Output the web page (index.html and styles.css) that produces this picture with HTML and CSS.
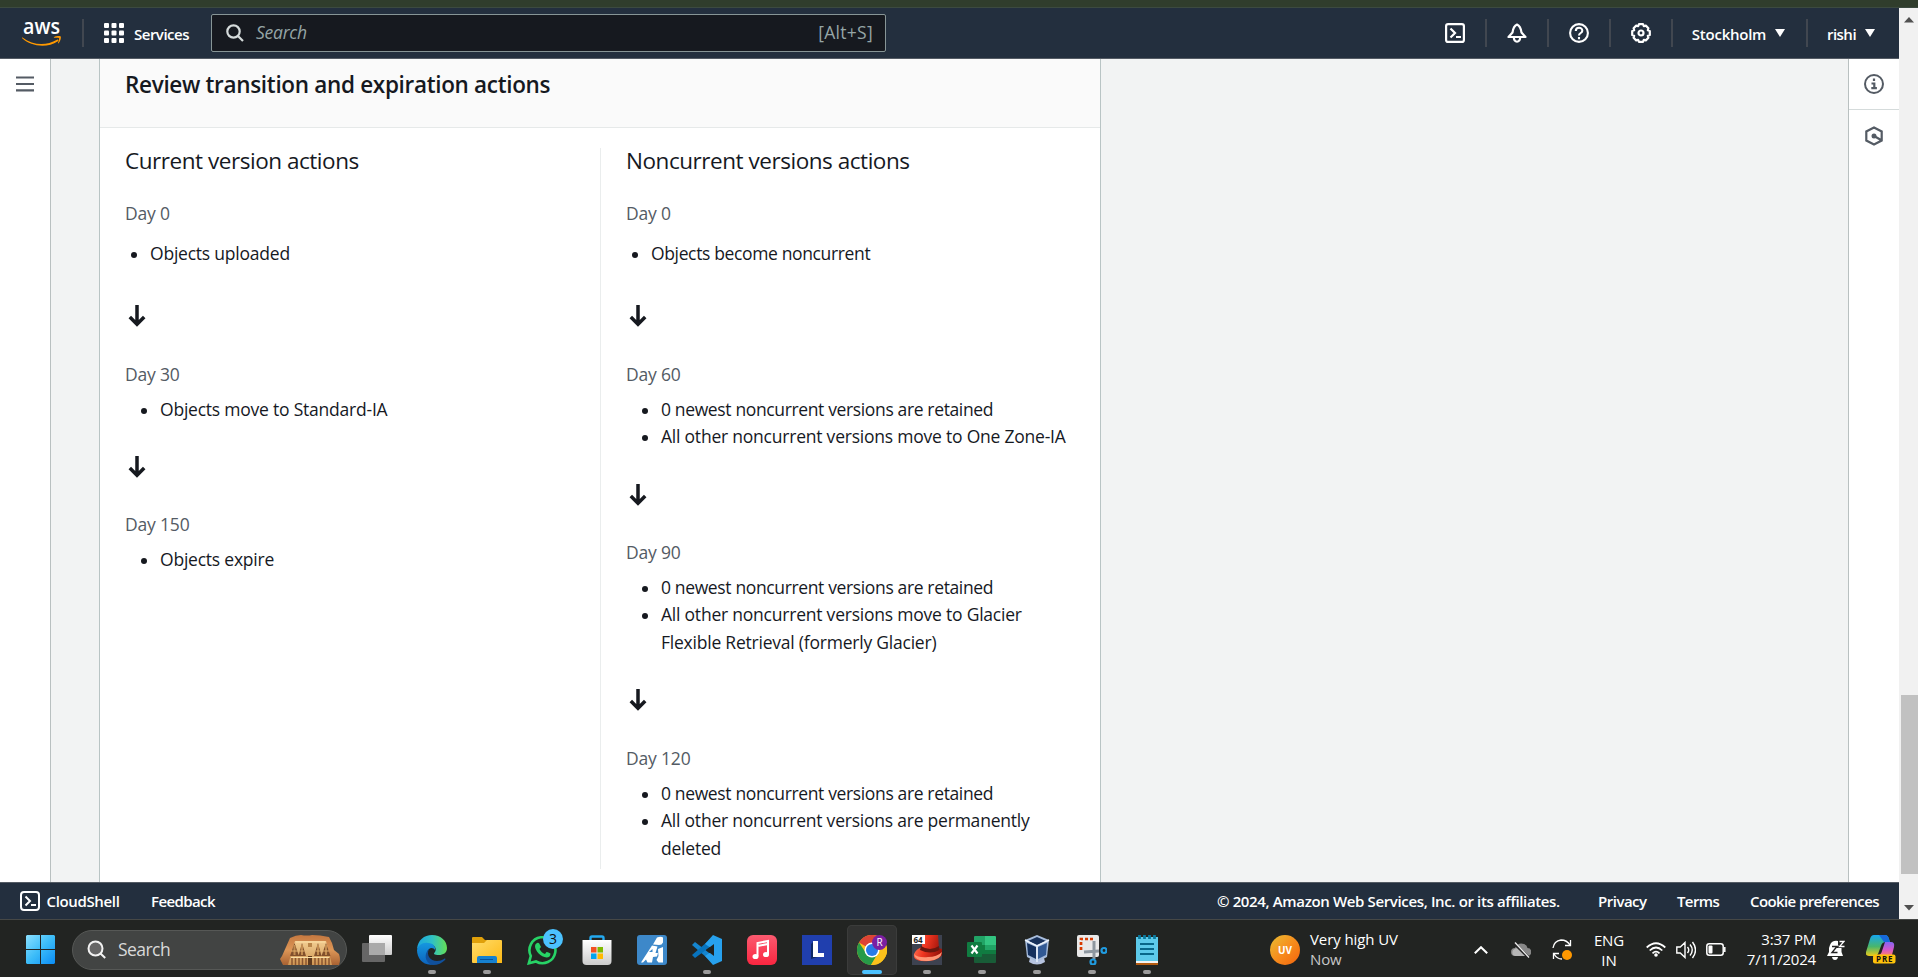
FILE: index.html
```
<!DOCTYPE html>
<html lang="en">
<head>
<meta charset="utf-8">
<title>Create lifecycle rule</title>
<link rel="stylesheet" href="styles.css">
</head>
<body>
<div class="top-strip"></div>
<div class="browser">
  <div class="console">
    <header class="nav">
      <svg class="aws-logo" viewBox="0 -10 40 47" width="40" height="47">
        <text x="1" y="14" textLength="37" lengthAdjust="spacingAndGlyphs" class="aws-word">aws</text>
        <path d="M.5 17.500c11 8.300 24 8.300 34.500 2.200 1.200-.6 2 .6.900 1.500C25 28.600 9 26.500.2 18.300c-.5-.5-.2-1.100.3-.8z" fill="#f90"/>
        <path d="M32 17.200c2-1.200 6-1.400 6.700-.6.600.9-.2 5-2.200 6.700-.4.300-.7.100-.5-.3.600-1.500 1.500-4.300 1-4.900s-3.300-.5-4.800-.3c-.5.100-.6-.3-.2-.6z" fill="#f90"/>
      </svg>
      <span class="nav-rule"></span>
      <svg class="grid-icon" viewBox="0 0 20 20" width="20" height="20" fill="#fff"><g id="r"><rect width="5" height="5" rx="1"/><rect x="7.500" width="5" height="5" rx="1"/><rect x="15" width="5" height="5" rx="1"/></g><use href="#r" y="7.500"/><use href="#r" y="15"/></svg>
      <span class="nav-text services">Services</span>
      <div class="search">
        <svg viewBox="0 0 18 18" width="18" height="18" fill="none" stroke="#d5dbdb" stroke-width="2.200"><circle cx="7.500" cy="7.500" r="6.200"/><path d="M12 12l5 5"/></svg>
        <span class="search-hint">Search</span>
        <span class="search-key">[Alt+S]</span>
      </div>
      <div class="nav-right">
        <div class="nav-cell first"><svg viewBox="0 0 20 20" width="20" height="20" fill="none" stroke="#fff" stroke-width="2.200"><rect x="1.100" y="1.100" width="17.800" height="17.800" rx="2"/><path d="M5.500 5.500L10 10l-4.500 4.500M11 14h5"/></svg></div>
        <div class="nav-cell c62"><svg viewBox="0 0 20 20" width="20" height="20" fill="none" stroke="#fff" stroke-width="2.200" stroke-linejoin="round"><path d="M10 1.500C6.500 3 6 6 5.500 9.500L1.500 14h17l-4-4.500C14 6 13.500 3 10 1.500zM6.800 14.500c.4 5.500 6 5.500 6.400 0"/></svg></div>
        <div class="nav-cell c62"><svg viewBox="0 0 20 20" width="20" height="20" fill="none" stroke="#fff" stroke-width="2.100"><circle cx="10" cy="10" r="8.900"/><path d="M6.800 8c0-4.200 6.500-4.200 6.500-.3 0 2.400-3.300 2.200-3.300 4.800M10 14v2.200"/></svg></div>
        <div class="nav-cell c62"><svg viewBox="0 0 20 20" width="20" height="20" fill="none" stroke="#fff" stroke-width="2.200" stroke-linejoin="round"><path d="M8 1.200h4l.8 2 2-.6 2.600 2.600-.6 2 2 .8v4l-2 .8.600 2-2.600 2.600-2-.6-.8 2H8l-.8-2-2 .6-2.600-2.600.6-2-2-.8V8l2-.8-.6-2 2.600-2.600 2 .6z"/><circle cx="10" cy="10" r="2.500"/></svg></div>
        <div class="nav-cell region"><span class="nav-text">Stockholm</span><svg viewBox="0 0 10 8" width="10" height="8"><path d="M0 0h10L5 8z" fill="#fff"/></svg></div>
        <div class="nav-cell user"><span class="nav-text">rishi</span><svg viewBox="0 0 10 8" width="10" height="8"><path d="M0 0h10L5 8z" fill="#fff"/></svg></div>
      </div>
    </header>
    <main class="body">
      <aside class="left-rail"><svg viewBox="0 0 18 16" width="18" height="16" stroke="#545b64" stroke-width="2.200"><path d="M0 1.500h18M0 8h18M0 14.300h18"/></svg></aside>
      <section class="card">
        <h2 class="card-title">Review transition and expiration actions</h2>
        <div class="columns">
          <div class="col current">
            <h3>Current version actions</h3>
            <p class="day">Day 0</p>
            <ul class="first-list"><li>Objects uploaded</li></ul>
            <div class="step"><svg viewBox="0 0 18 22" width="18" height="22"><path d="M9 0v18.500M1.800 12L9 19.300 16.200 12"/></svg></div>
            <p class="day">Day 30</p>
            <ul><li>Objects move to Standard-IA</li></ul>
            <div class="step"><svg viewBox="0 0 18 22" width="18" height="22"><path d="M9 0v18.500M1.800 12L9 19.300 16.200 12"/></svg></div>
            <p class="day">Day 150</p>
            <ul><li>Objects expire</li></ul>
          </div>
          <div class="col noncurrent">
            <h3>Noncurrent versions actions</h3>
            <p class="day">Day 0</p>
            <ul class="first-list"><li>Objects become noncurrent</li></ul>
            <div class="step"><svg viewBox="0 0 18 22" width="18" height="22"><path d="M9 0v18.500M1.800 12L9 19.300 16.200 12"/></svg></div>
            <p class="day">Day 60</p>
            <ul><li>0 newest noncurrent versions are retained</li><li>All other noncurrent versions move to One Zone-IA</li></ul>
            <div class="step"><svg viewBox="0 0 18 22" width="18" height="22"><path d="M9 0v18.500M1.800 12L9 19.300 16.200 12"/></svg></div>
            <p class="day">Day 90</p>
            <ul><li>0 newest noncurrent versions are retained</li><li>All other noncurrent versions move to Glacier Flexible Retrieval (formerly Glacier)</li></ul>
            <div class="step"><svg viewBox="0 0 18 22" width="18" height="22"><path d="M9 0v18.500M1.800 12L9 19.300 16.200 12"/></svg></div>
            <p class="day">Day 120</p>
            <ul><li>0 newest noncurrent versions are retained</li><li>All other noncurrent versions are permanently deleted</li></ul>
          </div>
        </div>
      </section>
      <aside class="right-rail">
        <div class="tool"><svg viewBox="0 0 20 20" width="20" height="20" fill="none" stroke="#545b64" stroke-width="2"><circle cx="10" cy="10" r="9"/><path d="M10 4.500v2.500M7.500 9.500h2.800v4.500M7.300 14.200h5.600" stroke-width="2.200"/></svg></div>
        <div class="tool plain"><svg viewBox="0 0 20 20" width="20" height="20" fill="none" stroke="#545b64" stroke-width="2.200"><path d="M10 1.500l7.700 4v9l-7.700 4-7.700-4v-9zM10 10l7.500 4.200"/><circle cx="10" cy="10" r="2.500" fill="#545b64" stroke="none"/></svg></div>
      </aside>
    </main>
    <footer class="foot">
      <svg viewBox="0 0 20 20" width="20" height="20" fill="none" stroke="#fff" stroke-width="2"><rect x="1" y="1" width="18" height="18" rx="3"/><path d="M5.500 5.500L10 10l-4.500 4.500M11 14h5"/></svg>
      <span class="f-shell">CloudShell</span>
      <span class="f-feedback">Feedback</span>
      <span class="f-copy">© 2024, Amazon Web Services, Inc. or its affiliates.</span>
      <span class="f-privacy">Privacy</span>
      <span class="f-terms">Terms</span>
      <span class="f-cookie">Cookie preferences</span>
    </footer>
  </div>
  <div class="scrollbar">
    <svg viewBox="0 0 10 6" width="10" height="6"><path d="M0 5.500L5 0l5 5.500z" fill="#505050"/></svg>
    <div class="thumb"></div>
    <svg viewBox="0 0 10 6" width="10" height="6"><path d="M0 0h10L5 5.500z" fill="#505050"/></svg>
  </div>
</div>
<div class="taskbar">
  <svg class="start" viewBox="0 0 29 29" width="29" height="29"><defs><linearGradient id="w" x1="0" y1="0" x2="29" y2="29" gradientUnits="userSpaceOnUse"><stop stop-color="#8be0ff"/><stop offset=".5" stop-color="#3cbcf8"/><stop offset="1" stop-color="#0a8cf5"/></linearGradient></defs><path d="M1 0h13v14H0V1zM15 0h13l1 1v13H15zM0 15h14v14H1l-1-1zM15 15h14v13l-1 1H15z" fill="url(#w)"/></svg>
  <div class="tb-search">
    <svg viewBox="0 0 19 19" width="19" height="19" fill="none" stroke="#f2f2f2" stroke-width="2"><circle cx="8.500" cy="8.500" r="7" fill="#666"/><path d="M13.500 13.500l4.700 4.500"/></svg>
    <span>Search</span>
    <svg class="temple" viewBox="0 0 60 31" width="60" height="31">
      <defs><linearGradient id="rk" x2="0" y2="1"><stop stop-color="#c47840"/><stop offset=".5" stop-color="#dd9657"/><stop offset="1" stop-color="#a86232"/></linearGradient><linearGradient id="fc" x2="0" y2="1"><stop stop-color="#f2cd91"/><stop offset="1" stop-color="#cf9653"/></linearGradient></defs>
      <path d="M10 4Q16 1 21 1q6 1 11 0 8 0 17 2l3 6 2 7 5 4q2 6 0 11H3L0 25l2-3 4-9z" fill="url(#rk)"/>
      <path d="M15 7h31l6 24H8z" fill="url(#fc)"/>
      <path d="M16 8h29" stroke="#f9dda4"/>
      <path d="M28 9h4v4h-4z" fill="#b98549"/>
      <path d="M28 22h4v9h-4z" fill="#5f3a1e"/>
      <g fill="#82502c"><path d="M10 22l4.500-13L19 22zM18.500 22L22 9l4 13zM34 22l4-13 3.500 13zM41.500 22L46 9l4.500 13z"/></g>
      <path d="M14.500 11v10M22 11v10M38 11v10M46 11v10" stroke="#c28c50" stroke-width="2"/>
      <path d="M11 17h7M19.500 17h5M35.500 17h5M43 17h6" stroke="#e2b06c"/>
      <path d="M11 23.500h38" stroke="#f9dda4"/>
      <path d="M12 24v7M15.500 24v7M19 24v7M22.500 24v7M26 24v7M35 24v7M38.500 24v7M42 24v7M45.500 24v7M49 24v7" stroke="#8a5530" stroke-width="1.500"/>
    </svg>
  </div>
  <div class="apps">
    <div class="app"><svg viewBox="0 0 30 30"><defs><linearGradient id="tv" x2="0" y2="1"><stop stop-color="#fff"/><stop offset="1" stop-color="#ccc"/></linearGradient></defs><rect y="8" width="23" height="19" rx="1" fill="#666"/><rect x="7" width="23" height="20" rx="1" fill="url(#tv)"/><path d="M7 8h16v12H7z" fill="#aaa"/></svg></div>
    <div class="app on"><svg viewBox="0 0 30 30"><defs><linearGradient id="e1" x1="0" x2="1"><stop stop-color="#1ba5df"/><stop offset=".5" stop-color="#2fc0c5"/><stop offset="1" stop-color="#65df55"/></linearGradient><linearGradient id="e2" x2="0" y2="1"><stop stop-color="#1597df"/><stop offset="1" stop-color="#0c63bd"/></linearGradient></defs><path d="M0 14C1 5 7 0 15 0c9 0 15 6 15 13 0 5-4 7-8 7-5 0-6-1-4-3 2-3 0-7-5-8C8 8 3 10 0 14z" fill="url(#e1)"/><path d="M0 15c1-5 6-8 11-7 5 0 8 4 7 7-1-2-4-3-6-1-4 4-1 12 6 15C7 32 0 24 0 15z" fill="url(#e2)"/><path d="M12 14c-3 6 1 12 8 12 3 0 5-1 7-2 1-1 2 0 1 1-3 3-7 5-12 5C7 28 7 18 12 14z" fill="#10509c"/></svg></div>
    <div class="app on"><svg viewBox="0 0 30 30"><defs><linearGradient id="fo" x2="1" y2="1"><stop stop-color="#ffdc6a"/><stop offset="1" stop-color="#fdb915"/></linearGradient></defs><path d="M0 3q0-1 1-1h9l3 3h16v10H0z" fill="#e0a00a"/><path d="M0 8h12l3-3h14q1 0 1 1v22H1q-1 0-1-1z" fill="url(#fo)"/><path d="M5 28v-5q0-2 2-2h16q2 0 2 2v5z" fill="#1681cf"/><path d="M8 24.500h13" stroke="#07529b"/></svg></div>
    <div class="app wa"><svg viewBox="0 0 30 30"><path d="M1.800 28.300l2-7.300A13 13 0 1 1 9 26.500z" fill="none" stroke="#27d366" stroke-width="2.600"/><path d="M10 8q2-1 3 2l1 2-1.500 2q2 4 5.500 5l1.500-2q1-.5 4 1.500 0 4-4 4C14 22 8 16 8 11q0-2 2-3z" fill="#27d366"/></svg><span class="badge">3</span></div>
    <div class="app"><svg viewBox="0 0 30 30"><path d="M8.500 7V3q0-1.500 1.500-1.500h10q1.500 0 1.500 1.500v4" fill="none" stroke="#23a9f0" stroke-width="2.400"/><path d="M.5 5h29v21q0 4-4 4h-21q-4 0-4-4z" fill="url(#tv)"/><path fill="#f25022" d="M9 12h5.500v5.500H9z"/><path fill="#7fba00" d="M15.500 12H21v5.500h-5.500z"/><path fill="#00a4ef" d="M9 18.500h5.500V24H9z"/><path fill="#ffb900" d="M15.500 18.500H21V24h-5.500z"/></svg></div>
    <div class="app"><svg viewBox="0 0 30 30"><rect width="30" height="30" rx="3" fill="#3d88c9"/><g fill="#fff"><path d="M20 2.500q4-1.500 6 0v5q-1 2.500-4 2.500l-6-.5zM15 10.500l5.500 1-2 6.500h2.500l-1 3.500-4 .5-1 5.500h-4.500l-1.500-3-3 3H4zM21 14l5-2v15.500h-4.500l-2-2.500 2-4z"/></g><path d="M15.500 17h-3.500l3.500-3z" fill="#3d88c9"/></svg></div>
    <div class="app on"><svg viewBox="0 0 30 30"><path d="M0 10l3-3 18 14v7z" fill="#1585cf"/><path d="M0 20l3 3L22 9V1z" fill="#0873bd"/><path d="M21 0l9 4v22l-9 4-8-9 9-6-9-6z" fill="#27a1ee"/><path d="M22 9v12l-8-6z" fill="#20221f"/></svg></div>
    <div class="app"><svg viewBox="0 0 30 30"><defs><linearGradient id="mu" x2="0" y2="1"><stop stop-color="#fb5a70"/><stop offset="1" stop-color="#fa2640"/></linearGradient></defs><rect width="30" height="30" rx="6" fill="url(#mu)"/><path d="M10.500 21V8L21 6v13M10.500 11L21 9" stroke="#fff" stroke-width="2" fill="none"/><ellipse cx="8.500" cy="21.500" rx="3" ry="2.600" fill="#fff"/><ellipse cx="19" cy="19.500" rx="3" ry="2.600" fill="#fff"/></svg></div>
    <div class="app"><svg viewBox="0 0 30 30"><path fill="#203fae" d="M0 0h30v30H0z"/><path d="M9 9l3-3v12l4 4-7 2z" fill="#0e2965"/><path d="M11 6h5v12h6v4H11z" fill="#fff"/></svg></div>
    <div class="app active"><svg viewBox="0 0 30 30"><circle cx="15" cy="15" r="15" fill="#fbc11b"/><path d="M15 15L2 7.500A15 15 0 0 1 28 7.500L15 8z" fill="#dc4335"/><path d="M2 7.500A15 15 0 0 0 14 30l7-11-12-1z" fill="#279b48"/><path d="M28 7.500A15 15 0 0 1 14 30l7-12V8z" fill="#fbc11b"/><circle cx="15" cy="15" r="7.500" fill="#fff"/><circle cx="15" cy="15" r="6" fill="#287be8"/></svg><span class="badge profile">R</span></div>
    <div class="app on"><svg viewBox="0 0 30 30"><defs><linearGradient id="ht" x2="1" y2=".3"><stop stop-color="#ff8060"/><stop offset=".5" stop-color="#ee3520"/><stop offset="1" stop-color="#9e150c"/></linearGradient></defs><path fill="#3d4250" d="M0 0h30v30H0z"/><path d="M10 0h16l1 13 3 1v6q-3 5-13 6C5 27 1 24 2 19q2-5 8-7z" fill="url(#ht)"/><path d="M9 11q9 6 18 0l.5 4q-9 5-19.500 0z" fill="#69170f"/><path d="M2 19q4 4 14 3 9 0 14-5-1 8-13 9-14 1-15-7z" fill="#ff9575"/><path d="M0 0h13v9H0z" fill="#fff"/><text x="1.500" y="8" class="tag64">64</text></svg></div>
    <div class="app on"><svg viewBox="0 0 30 30"><path fill="#21a366" d="M7 2q0-1 1-1h11v10H7z"/><path fill="#33c481" d="M18 1h10q1 0 1 1v8H18z"/><path fill="#107c41" d="M7 10h11v10H7z"/><path fill="#21a366" d="M18 10h11v6H18z"/><path fill="#107c41" d="M18 15h11v6H18z"/><path fill="#185c37" d="M7 19h22v8q0 1-1 1H8q-1 0-1-1z"/><rect y="7" width="15" height="15" rx="1" fill="#107c41"/><path d="M4.500 10.500l6 8M10.500 10.500l-6 8" stroke="#fff" stroke-width="2.100"/></svg></div>
    <div class="app on"><svg viewBox="0 0 30 30"><path d="M8 23h14l1 4q-8 5-16 0z" fill="#b6c3df"/><path d="M15 0l12 5-2 17-10 5-10-5L3 5z" fill="#a8bddc"/><path d="M15 2l9 4-9 4-9-4z" fill="#18315b"/><path d="M5 8l9 4v12l-8-4z" fill="#14305e"/><path d="M25 8l-9 4v12l8-4z" fill="#315994"/><path d="M3 5l12 6 12-6M15 11v16" fill="none" stroke="#edf3fc" stroke-width="1.400"/></svg></div>
    <div class="app on"><svg viewBox="0 0 30 30"><rect width="22" height="22" rx="2" fill="#e9e9e9"/><path d="M4 15V4h12" fill="none" stroke="#d83b01" stroke-width="2.700" stroke-dasharray="3 2"/><path d="M17 6v18M7 17l15-1" stroke="#8e979f" stroke-width="3"/><g fill="none" stroke="#209be0" stroke-width="2.200"><circle cx="27" cy="15.500" r="2.500"/><circle cx="16" cy="27" r="2.500"/></g></svg></div>
    <div class="app on"><svg viewBox="0 0 30 30"><path d="M4 2h22v26H4z" fill="#5dcaea"/><path d="M4 26h22v3H4z" fill="#f3f3f3"/><path d="M4 28h22v2H4z" fill="#b45c12"/><path d="M8 9h14M8 14h14M8 19h14" stroke="#086789" stroke-width="2"/><path d="M7.500 0v4M12.500 0v4M17.500 0v4M22.500 0v4" stroke="#0b7a9e" stroke-width="2.800"/></svg></div>
  </div>
  <div class="uv">UV</div>
  <div class="weather"><span>Very high UV</span><span class="dim">Now</span></div>
  <div class="tray">
    <svg class="chev" viewBox="0 0 14 8" width="14" height="8" fill="none" stroke="#fff" stroke-width="2"><path d="M.8 7.300L7 1.200l6.200 6.100"/></svg>
    <svg class="cloud" viewBox="0 0 20 16" width="20" height="16"><path d="M4 14a4 4 0 0 1 0-8Q7 0 13 2q3 1 3.500 4A4 4 0 0 1 16 14z" fill="#888"/><path d="M2 8q5-4 9 0l6 5q-1 1-2 1H4q-4-1-2-6z" fill="#b5b5b5"/><path d="M3 1l15 15" stroke="#222" stroke-width="3"/><path d="M4 .5l14 15" stroke="#eee" stroke-width="1.300"/></svg>
    <svg class="sync" viewBox="0 0 20 21" width="20" height="21" fill="none" stroke="#fff" stroke-width="1.300"><path d="M1 9Q2 2 9 1q6 0 9 5M18.500 1v5.500H13M1.500 20v-5.500H7M2 15q3 5 8 5"/><circle cx="15" cy="16" r="5" fill="#ff9800" stroke="none"/></svg>
    <div class="lang"><span>ENG</span><span>IN</span></div>
    <svg class="wifi" viewBox="0 0 20 15" width="20" height="15" fill="none" stroke="#fff" stroke-width="1.700"><path d="M.7 5.500Q10-3 19.300 5.500M3.700 8.500Q10 2.500 16.300 8.500M6.500 11.300Q10 8 13.500 11.300"/><circle cx="10" cy="13" r="1.800" fill="#fff" stroke="none"/></svg>
    <svg class="sound" viewBox="0 0 20 18" width="20" height="18" fill="none" stroke="#fff" stroke-width="1.400"><path d="M.8 6h3.500L9 1.500v15L4.300 12H.8zM11.500 6q2.500 3 0 6M14 3.500q4.500 5.500 0 11M16.500 1q6 8 0 16"/></svg>
    <svg class="battery" viewBox="0 0 20 13" width="20" height="13" fill="none" stroke="#fff" stroke-width="1.500"><rect x=".8" y=".8" width="16.400" height="11.400" rx="2.500"/><path d="M18.800 4v5"/><rect x="2.500" y="2.500" width="4" height="8" rx="1" fill="#fff" stroke="none"/></svg>
    <div class="clock"><span>3:37 PM</span><span>7/11/2024</span></div>
    <svg class="bell" viewBox="0 0 18 20" width="18" height="20"><path d="M3 5q2-5 8-4v4h3.500v7l1.500 4H0l2-4V8zM5 17h6q-.5 3-3 3t-3-3z" fill="#fff"/><path d="M5 6.500h5l-5 6h5.500" fill="none" stroke="#222" stroke-width="1.400"/><path d="M12.500 1.500H17L12.500 6.500h5" fill="none" stroke="#222" stroke-width="3"/><path d="M12.500 1.500H17L12.500 6.500h5" fill="none" stroke="#fff" stroke-width="1.300"/></svg>
    <svg class="copilot" viewBox="0 0 30 29" width="30" height="29"><defs><linearGradient id="c1" x2="0" y2="1"><stop stop-color="#16a7ef"/><stop offset=".55" stop-color="#48b66c"/><stop offset="1" stop-color="#eecb19"/></linearGradient><linearGradient id="c2" x2="0" y2="1"><stop stop-color="#8566f4"/><stop offset=".6" stop-color="#d758c8"/><stop offset="1" stop-color="#fb7a7a"/></linearGradient></defs><path d="M8 0h11q3 0 4 4l1 3h-4q-4 0-5 4l-3 8q-1 2-4 2H3q-4 0-3-4L4 4q1-4 4-4z" fill="url(#c1)"/><path d="M8 0h11q3 0 4 4l1 3h-6L13 0z" fill="#1769db"/><path d="M19 7h6q4 0 3 5l-2 8H12q3 0 4-4z" fill="url(#c2)"/><rect x="7" y="19.500" width="22.500" height="9" rx="2" fill="#ffc20a"/><text x="10" y="27" textLength="16.500" class="pre">PRE</text></svg>
  </div>
</div>
</body>
</html>
```
FILE: styles.css
```
* { box-sizing: border-box; margin: 0; padding: 0; }
html, body { width: 1918px; height: 977px; overflow: hidden; }
body { font-family: "Open Sans", "Noto Sans", sans-serif; font-size: 17.5px; line-height: 27.5px; color: #16191f; background: #fff; }
svg { display: block; flex: none; }
span { white-space: nowrap; }

.top-strip { height: 8px; background: #303d2c; border-bottom: 1px solid #3c4a40; }
.browser { display: flex; height: 911px; }
.console { width: 1899px; display: flex; flex-direction: column; }

.nav { height: 51px; display: flex; align-items: center; background: #232f3e; border-bottom: 1px solid #545b64; color: #fff; }
.aws-logo { margin-left: 22px; }
.aws-word { font: 600 21px "Open Sans", sans-serif; fill: #fff; }
.nav-rule { width: 2px; height: 28px; background: #414750; margin: 0 20px; }
.nav-text { font-size: 15px; font-weight: 600; letter-spacing: -.5px; line-height: 20px; padding-top: 1px; }
.services { margin-left: 10px; width: 55px; }
.search { width: 675px; height: 38px; margin-left: 22px; padding: 0 12px 0 14px; display: flex; align-items: center; background: #16191f; border: 1px solid #879596; border-radius: 2px; color: #95a5a6; }
.search-hint { margin-left: 12px; font-style: italic; letter-spacing: -.25px; }
.search-key { margin-left: auto; letter-spacing: .3px; }
.nav-right { display: flex; margin-left: auto; height: 28px; }
.nav-cell { display: flex; align-items: center; justify-content: center; border-left: 2px solid #414750; }
.nav-cell.first { width: 61px; border-left: 0; }
.c62 { width: 62px; }
.region { width: 135px; gap: 9px; padding-right: 2px; }
.user { width: 93px; gap: 9px; padding-right: 5px; }
.region .nav-text { letter-spacing: -.25px; }

.body { height: 823px; display: flex; background: #f2f3f3; overflow: hidden; }
.left-rail { width: 51px; background: #fff; border-right: 1px solid #b9c0c0; padding: 17px 0 0 16px; }
.card { width: 1002px; margin-left: 48px; background: #fff; border: 1px solid #b9c4c4; border-width: 0 1px; }
.card-title { height: 69px; padding: 12px 25px; font-size: 22.500px; font-weight: 600; line-height: 28px; letter-spacing: -.32px; background: #fafafa; border-bottom: 1px solid #e6e9e9; }
.columns { display: flex; padding-top: 20px; }
.col { height: 721px; }
.current { width: 501px; padding-left: 25px; border-right: 1px solid #eaeded; }
.noncurrent { width: 474px; padding-left: 25px; }
.col h3 { font-size: 22.500px; font-weight: 400; line-height: 27.500px; letter-spacing: -.46px; margin: -1.300px 0 25.500px; }
.day { color: #545b64; letter-spacing: -.18px; }
.col ul { list-style: none; margin-top: 7.500px; padding-left: 35px; }
.col ul.first-list { margin: 12.500px 0 5px; padding-left: 25px; }
.col li { letter-spacing: -.22px; }
.col li::before { content: ""; float: left; width: 6px; height: 6px; margin: 12px 0 0 -19px; border-radius: 50%; background: #16191f; }
.noncurrent .first-list li, .noncurrent li:first-child { letter-spacing: -.36px; }
.step { height: 88.300px; padding: 33px 0 0 3px; }
.step path { fill: none; stroke: #16191f; stroke-width: 3.500; }

.right-rail { width: 51px; margin-left: auto; background: #fff; border-left: 1px solid #b9c0c0; }
.tool { height: 51px; display: flex; align-items: center; justify-content: center; border-bottom: 1px solid #d5dbdb; }
.tool.plain { border: 0; }

.foot { height: 37px; display: flex; align-items: center; padding: 0 20px; background: #232f3e; border-top: 1px solid #545b64; color: #fff; font-size: 15px; font-weight: 600; }
.foot span { padding-top: 1px; }
.f-shell { width: 104.500px; margin-left: 6.500px; letter-spacing: -.35px; }
.f-feedback { letter-spacing: -.6px; }
.f-copy { margin-left: auto; width: 381px; letter-spacing: -.36px; }
.f-privacy { width: 79px; letter-spacing: -.5px; }
.f-terms { width: 73px; letter-spacing: -.6px; }
.f-cookie { width: 129px; letter-spacing: -.6px; }

.scrollbar { width: 19px; height: 911px; display: flex; flex-direction: column; align-items: center; background: #f1f1f1; padding: 9px 0 8px; }
.scrollbar svg:last-child { margin-top: auto; }
.thumb { width: 17px; height: 179px; margin: 672px 0 0 2px; background: #c1c1c1; }

.taskbar { height: 58px; display: flex; align-items: center; background: #222422; border-top: 1px solid #464846; padding-top: 2px; color: #fff; }
.start { margin-left: 26px; }
.tb-search { width: 275px; height: 40px; margin-left: 17px; padding: 0 6px 0 14px; display: flex; align-items: center; border-radius: 20px; background: #424443; border: 1px solid #565856; color: #d9d9d9; letter-spacing: -.55px; }
.tb-search span { margin-left: 12px; }
.temple { margin-left: auto; }
.apps { display: flex; align-items: center; margin-left: 5px; gap: 5px; }
.app { width: 50px; height: 50px; display: flex; align-items: center; justify-content: center; position: relative; border-radius: 5px; }
.app > svg { width: 30px; height: 30px; }
.app.on::after, .app.active::after { content: ""; position: absolute; bottom: 1px; left: 21px; width: 8px; height: 4px; border-radius: 2px; background: #9b9b9b; }
.app.active { background: #313231; box-shadow: inset 0 0 0 1px #3b3c3b; }
.app.active::after { left: 15px; width: 20px; background: #4cc2ff; }
.badge { position: absolute; left: 26px; top: 4px; width: 20px; height: 20px; border-radius: 50%; background: #4cc2ff; color: #111; font-size: 14px; line-height: 20px; text-align: center; }
.profile { left: 25px; top: 10px; width: 15px; height: 15px; line-height: 15px; font-size: 10px; background: #7b1fa2; color: #fff; }
.tag64 { font: 700 8px "Open Sans", sans-serif; fill: #222; }
.uv { width: 30px; height: 30px; margin-left: 98px; border-radius: 50%; background: linear-gradient(135deg, #e8bd33, #f78d1d 50%, #f2640d); font-size: 10px; font-weight: 700; line-height: 30px; text-align: center; }
.weather, .lang, .clock { display: flex; flex-direction: column; font-size: 15px; line-height: 20px; letter-spacing: -.1px; }
.weather { margin: -2px 0 0 10px; width: 90px; }
.dim { color: #c8c8c8; }
.tray { display: flex; align-items: center; margin-left: 74px; }
.cloud { margin-left: 23px; }
.sync { margin-left: 21px; }
.lang { width: 40px; margin-left: 17px; text-align: center; }
.wifi { margin-left: 17px; }
.sound { margin-left: 10px; }
.battery { margin-left: 10px; }
.clock { width: 80px; margin: -2px 0 0 10px; text-align: right; letter-spacing: -.2px; }
.bell { margin-left: 11px; }
.copilot { margin-left: 21px; }
.pre { font: 700 8px "Open Sans", sans-serif; fill: #111; }
```
